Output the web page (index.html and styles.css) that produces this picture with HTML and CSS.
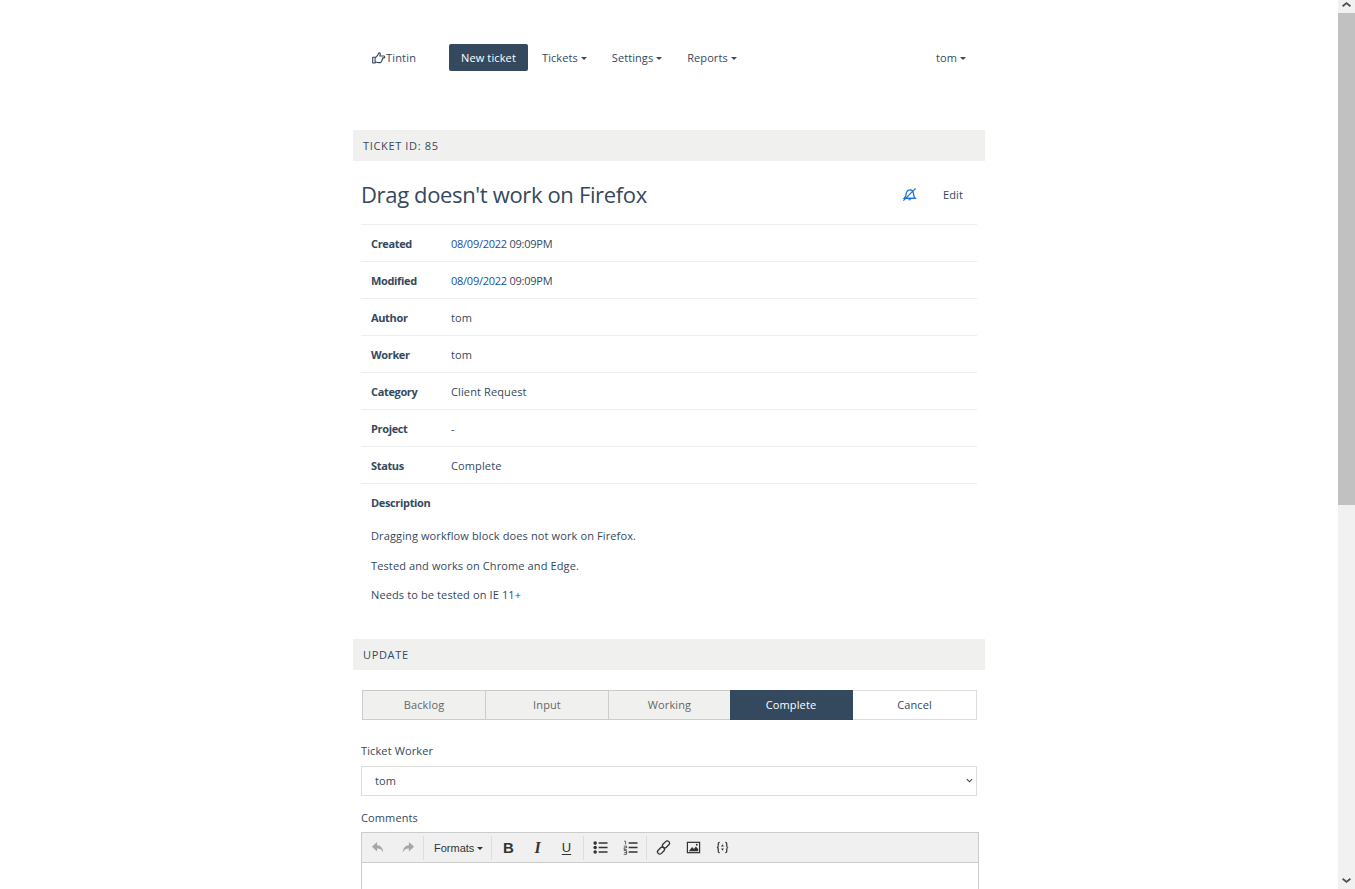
FILE: index.html
```html
<!DOCTYPE html>
<html lang="en">
<head>
<meta charset="utf-8">
<title>Tintin</title>
<link rel="stylesheet" href="styles.css">
</head>
<body>
<div class="viewport">
  <div class="page">
    <nav class="nav">
      <a class="brand"><svg class="brand-icon" viewBox="0 0 14 12" width="14" height="12"><path d="M.7 5.200h2.400v5.800H.7zM3.100 5.600c1-.3 2.200-1.800 2.900-3 .4-.8.500-1.700 1.300-1.700 1 0 1.200 1.200.8 2.200l-.4.900h4.200c1.200 0 1.200 1.900 0 1.900h-1.300c.5.800.1 1.500-.5 1.700.3.800-.1 1.400-.7 1.500.1 1-.5 1.500-1.300 1.500H6.300c-1 0-2-.6-3.200-.8" fill="none" stroke="#34495e" stroke-width="1.100" stroke-linejoin="round"/></svg>Tintin</a>
      <a class="new-ticket">New ticket</a>
      <a class="nav-item first">Tickets<i class="caret"></i></a>
      <a class="nav-item">Settings<i class="caret"></i></a>
      <a class="nav-item">Reports<i class="caret"></i></a>
      <a class="nav-item user">tom<i class="caret"></i></a>
    </nav>

    <h2 class="section-head">TICKET ID: 85</h2>
    <div class="title-row">
      <h1 class="title">Drag doesn't work on Firefox</h1>
      <svg class="bell" viewBox="0 0 16 16" width="15" height="15"><path d="M2.500 12c1.300-1 1.700-2.800 1.900-4.500C4.700 5 6.300 3 8.700 3c2 0 3.100 1.400 3.300 3.300.2 2 .6 4.300 2 5.700z" fill="none" stroke="#1a73d9" stroke-width="1.400"/><path d="M6.600 13c.5 1.700 2.700 1.700 3.200 0z" fill="#1a73d9"/><path d="M1.500 14.500 14.500 1.500" stroke="#1a73d9" stroke-width="1.400"/></svg>
      <a class="edit">Edit</a>
    </div>
    <div class="details">
      <div class="row"><b>Created</b><span class="stamp"><span class="date">08/09/2022</span> 09:09PM</span></div>
      <div class="row"><b>Modified</b><span class="stamp"><span class="date">08/09/2022</span> 09:09PM</span></div>
      <div class="row"><b>Author</b><span>tom</span></div>
      <div class="row"><b>Worker</b><span>tom</span></div>
      <div class="row"><b>Category</b><span>Client Request</span></div>
      <div class="row"><b>Project</b><span>-</span></div>
      <div class="row"><b>Status</b><span>Complete</span></div>
      <div class="row"><b>Description</b></div>
      <div class="desc">
        <p>Dragging workflow block does not work on Firefox.</p>
        <p>Tested and works on Chrome and Edge.</p>
        <p>Needs to be tested on IE 11+</p>
      </div>
    </div>

    <h2 class="section-head">UPDATE</h2>
    <div class="status-group">
      <a class="status">Backlog</a>
      <a class="status">Input</a>
      <a class="status">Working</a>
      <a class="status active">Complete</a>
      <a class="status plain">Cancel</a>
    </div>
    <label class="field-label">Ticket Worker</label>
    <div class="select">tom<svg class="chev" viewBox="0 0 8 5" width="7" height="5"><path d="M1 1l3 3 3-3" fill="none" stroke="#444" stroke-width="1.200"/></svg></div>
    <label class="field-label comments">Comments</label>
    <div class="editor">
      <div class="toolbar">
        <div class="tool-group history">
          <svg class="tool" viewBox="0 0 16 16" width="15" height="15"><path d="M6.500 2 1 7.300l5.500 5V9.100c3 0 5 .7 6.500 4.400 0-4.400-2-7.500-6.500-8z" fill="#a6a6a6"/></svg>
          <svg class="tool" viewBox="0 0 16 16" width="15" height="15"><path d="M9.500 2 15 7.300l-5.500 5V9.100c-3 0-5 .7-6.500 4.400 0-4.400 2-7.500 6.500-8z" fill="#a6a6a6"/></svg>
        </div>
        <div class="tool-group fmt"><span class="formats">Formats<i class="caret dark"></i></span></div>
        <div class="tool-group text-tools">
          <span class="tool-b">B</span><span class="tool-i">I</span><span class="tool-u">U</span>
        </div>
        <div class="tool-group lists">
          <svg class="tool" viewBox="0 0 16 16" width="15" height="15"><path d="M6 2.500h9.500v1.600H6zM6 7.200h9.500v1.600H6zM6 11.900h9.500v1.600H6z" fill="#333"/><circle cx="2.300" cy="3.300" r="1.900" fill="#333"/><circle cx="2.300" cy="8" r="1.900" fill="#333"/><circle cx="2.300" cy="12.700" r="1.900" fill="#333"/></svg>
          <svg class="tool" viewBox="0 0 16 16" width="15" height="15"><path d="M6 2.500h9.500v1.600H6zM6 7.200h9.500v1.600H6zM6 11.900h9.500v1.600H6z" fill="#333"/><path d="M1.200 1.300h1.600v3.500M.8 6.500h3v1.800H1.200v1.800h2.700M.8 11.300h3v4h-3M1.500 13.300h2.300" fill="none" stroke="#333" stroke-width=".8"/></svg>
        </div>
        <div class="tool-group last">
          <svg class="tool" viewBox="0 0 16 16" width="15" height="15"><g fill="none" stroke="#333" stroke-width="1.400"><rect x="8.300" y="0.500" width="4.800" height="8.500" rx="2.400" transform="rotate(45 10.700 4.700)"/><rect x="2.900" y="7" width="4.800" height="8.500" rx="2.400" transform="rotate(45 5.300 11.300)"/></g></svg>
          <svg class="tool" viewBox="0 0 16 16" width="15" height="15"><rect x="1.500" y="2.500" width="13" height="11" fill="none" stroke="#333" stroke-width="1.300"/><path d="M3 12l3.500-4.500 2 2 2-2.500 2.500 2.500V12z" fill="#333"/><circle cx="11.500" cy="5" r="1" fill="#333"/></svg>
          <svg class="tool" viewBox="0 0 16 16" width="15" height="15"><path d="M5 2.500c-2 0-1.500 2-1.500 3.500 0 1.500-.5 2-1.500 2 1 0 1.500.5 1.500 2 0 1.500-.5 3.500 1.500 3.500M11 2.500c2 0 1.500 2 1.500 3.500 0 1.500.5 2 1.500 2-1 0-1.500.5-1.500 2 0 1.500.5 3.500-1.500 3.500" fill="none" stroke="#333" stroke-width="1.300"/><path d="M8 4.500 6.500 7h3zM8 11.500 6.500 9h3z" fill="#333"/></svg>
        </div>
      </div>
      <div class="edit-area"></div>
    </div>
  </div>
  <div class="scrollbar">
    <div class="sb-btn top"><svg viewBox="0 0 9 5" width="9" height="5"><path d="M4.500 0 9 3.500 7.800 5 4.500 2.200 1.200 5 0 3.500z" fill="#505050"/></svg></div>
    <div class="sb-thumb"></div>
    <div class="sb-track"></div>
    <div class="sb-btn"><svg viewBox="0 0 9 5" width="9" height="5"><path d="M4.500 5 9 1.500 7.800 0 4.500 2.800 1.200 0 0 1.500z" fill="#505050"/></svg></div>
  </div>
</div>
</body>
</html>
```
FILE: styles.css
```css
* { box-sizing: border-box; }
html, body { margin: 0; height: 100%; overflow: hidden; background: #fff; }
body { font-family: "Open Sans", "Noto Sans", sans-serif; font-size: 11px; color: #34495e; letter-spacing: .12px; }
.viewport { display: flex; height: 889px; }
.page { width: 632px; margin-left: 353px; margin-right: 353px; flex: none; overflow: hidden; }
.nav { display: flex; align-items: center; height: 27px; margin-top: 44px; margin-bottom: 59px; }
.brand { width: 96px; padding-left: 19px; display: flex; align-items: center; gap: 0; letter-spacing: .18px; }
.new-ticket { background: #34495e; color: #fff; width: 79px; height: 27px; line-height: 27px; text-align: center; border-radius: 2px; }
.nav-item { margin-left: 25px; letter-spacing: .08px; }
.nav-item.first { margin-left: 14px; }
.nav-item.user { margin-left: auto; margin-right: 19px; }
.caret { display: inline-block; width: 0; height: 0; margin-left: 3px; vertical-align: 2px; border-top: 3px solid #34495e; border-left: 3px solid transparent; border-right: 3px solid transparent; }
.caret.dark { border-top-color: #333; margin-left: 3px; }
.section-head { margin: 0; height: 31px; line-height: 31px; padding-left: 10px; background: #f0f0ee; font-size: 11px; font-weight: 400; letter-spacing: .65px; }
.title-row { display: flex; align-items: center; height: 63px; margin: 0 8px; padding-top: 2px; }
.title { margin: 0; font-size: 22px; font-weight: 400; letter-spacing: -.35px; flex: 1; }
.bell { margin-right: 26px; margin-top: 2px; }
.edit { margin-right: 14px; margin-top: 2px; }
.details { margin: 0 8px 0; padding-bottom: 29px; }
.row { display: flex; height: 37px; align-items: center; border-top: 1px solid #eee; padding-left: 10px; }
.row b { width: 80px; font-weight: 700; letter-spacing: -.35px; }
.stamp { letter-spacing: -.25px; }
.date { color: #1a4f9c; }
.desc { padding: 0 10px; margin-top: 1px; }
.desc p { margin: 0; height: 29.5px; line-height: 29.5px; }
.status-group { display: grid; grid-template-columns: 124px 123px 122px 122px 124px; margin: 20px 8px 0 9px; height: 29px; }
.status { text-align: center; line-height: 28px; background: #f0f0ee; border: 1px solid #ccc; border-left-width: 0; color: #666; }
.status:first-child { border-left-width: 1px; }
.status.active { background: #34495e; border-color: #34495e; color: #fff; margin-left: -1px; }
.status.plain { background: #fff; border-color: #ddd; color: #34495e; }
.field-label { display: block; margin: 24px 8px 0; line-height: 15px; height: 15px; }
.select { margin: 8px 8px 0; height: 30px; line-height: 28px; border: 1px solid #ddd; padding-left: 13px; display: flex; align-items: center; justify-content: space-between; padding-right: 3px; }
.field-label.comments { margin-top: 14px; }
.editor { margin: 7px 6px 0 8px; border: 1px solid #ccc; border-bottom: 0; }
.toolbar { display: flex; height: 30px; background: #f0f0f0; border-bottom: 1px solid #ccc; align-items: center; padding-top: 1px; }
.tool-group { display: flex; align-items: center; height: 24px; border-right: 1px solid #ddd; padding: 0 8px; gap: 14px; }
.tool-group.history { padding-left: 9px; }
.tool-group.lists { padding-left: 9px; gap: 15px; }
.tool-group.last { border-right: 0; padding-left: 9px; gap: 14.5px; }
.tool-group.fmt { width: 68px; padding: 0 0 0 10px; }
.formats { font-family: "Liberation Sans", sans-serif; font-size: 11px; letter-spacing: 0; color: #333; white-space: nowrap; }
.text-tools { gap: 0; padding: 0 2px; }
.text-tools span { width: 29px; text-align: center; font-family: "Liberation Sans", sans-serif; font-size: 15px; color: #333; letter-spacing: 0; }
.text-tools .tool-b { font-weight: 700; }
.text-tools .tool-i { font-style: italic; font-family: "Liberation Serif", serif; font-weight: 700; font-size: 16px; }
.text-tools .tool-u { text-decoration: underline; text-underline-offset: 2px; font-size: 13px; }
.edit-area { height: 40px; }
.scrollbar { position: fixed; top: 0; right: 0; bottom: 0; width: 17px; background: #f1f1f1; display: flex; flex-direction: column; }
.sb-btn { height: 17px; display: flex; align-items: center; justify-content: center; flex: none; }
.sb-btn.top { height: 13px; align-items: flex-start; padding-top: 2px; }
.sb-thumb { height: 492px; background: #c1c1c1; flex: none; }
.sb-track { flex: 1; }
```
